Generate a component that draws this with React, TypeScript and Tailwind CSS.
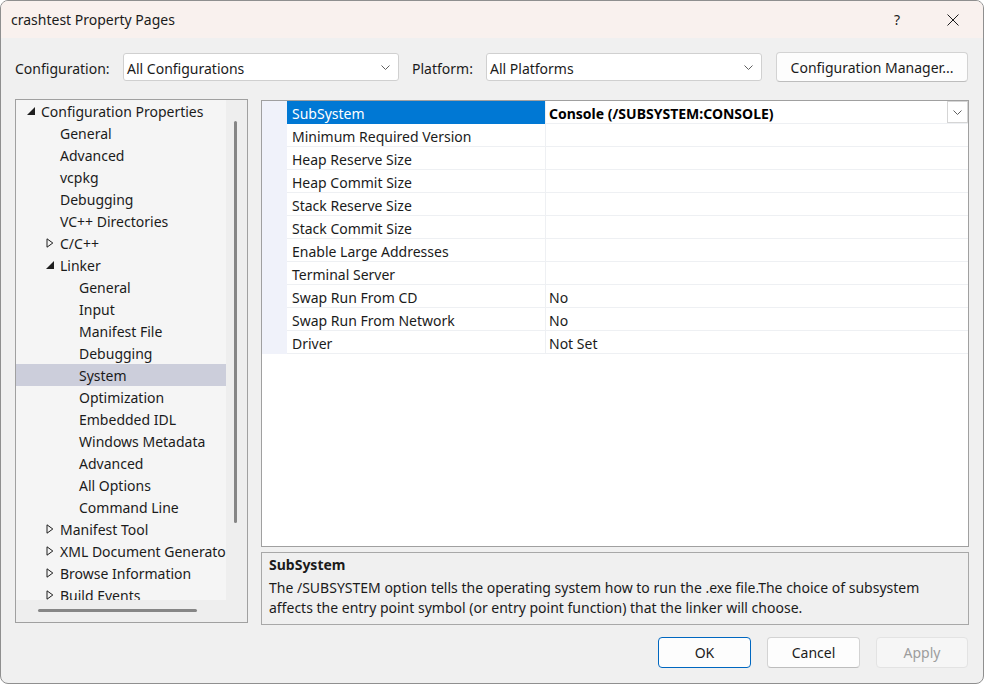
import React from "react";

type Node = [string, number, "open" | "closed" | null];

const tree: Node[] = [
  ["Configuration Properties", 0, "open"],
  ["General", 1, null],
  ["Advanced", 1, null],
  ["vcpkg", 1, null],
  ["Debugging", 1, null],
  ["VC++ Directories", 1, null],
  ["C/C++", 1, "closed"],
  ["Linker", 1, "open"],
  ["General", 2, null],
  ["Input", 2, null],
  ["Manifest File", 2, null],
  ["Debugging", 2, null],
  ["System", 2, null],
  ["Optimization", 2, null],
  ["Embedded IDL", 2, null],
  ["Windows Metadata", 2, null],
  ["Advanced", 2, null],
  ["All Options", 2, null],
  ["Command Line", 2, null],
  ["Manifest Tool", 1, "closed"],
  ["XML Document Generator", 1, "closed"],
  ["Browse Information", 1, "closed"],
  ["Build Events", 1, "closed"],
];

const indent = ["pl-[11px]", "pl-[30px]", "pl-[49px]"];

const props: [string, string][] = [
  ["SubSystem", "Console (/SUBSYSTEM:CONSOLE)"],
  ["Minimum Required Version", ""],
  ["Heap Reserve Size", ""],
  ["Heap Commit Size", ""],
  ["Stack Reserve Size", ""],
  ["Stack Commit Size", ""],
  ["Enable Large Addresses", ""],
  ["Terminal Server", ""],
  ["Swap Run From CD", "No"],
  ["Swap Run From Network", "No"],
  ["Driver", "Not Set"],
];

function Chevron() {
  return (
    <svg width="9" height="5" viewBox="0 0 9 5" className="shrink-0">
      <path d="M0.5 0.5 L4.5 4.5 L8.5 0.5" fill="none" stroke="#5f5f5f" strokeWidth="1" />
    </svg>
  );
}

function Toggle({ state }: { state: "open" | "closed" | null }) {
  if (state === "open") {
    return (
      <svg width="8" height="8" viewBox="0 0 8 8" className="shrink-0">
        <path d="M8 0 L8 8 L0 8 Z" fill="#1e1e1e" />
      </svg>
    );
  }
  if (state === "closed") {
    return (
      <svg width="8" height="10" viewBox="0 0 8 10" className="shrink-0">
        <path d="M1 0.8 L6.8 5 L1 9.2 Z" fill="none" stroke="#1e1e1e" strokeWidth="1" />
      </svg>
    );
  }
  return <span className="w-[8px] shrink-0" />;
}

function Combo({ value }: { value: string }) {
  return (
    <div className="w-[276px] h-[28px] bg-white border border-[#d0d0d0] rounded-[3px] flex items-center justify-between pl-[3px] pr-[8px]">
      <span className="pt-[2px]">{value}</span>
      <Chevron />
    </div>
  );
}

export default function App() {
  return (
    <div className="w-[984px] h-[684px] border border-[#8f8f8f] rounded-[8px] overflow-hidden flex flex-col bg-[#f0f0f0] text-[14px] text-[#1b1b1b] font-['Noto_Sans',sans-serif]">
      {/* Title bar */}
      <div className="h-[37px] shrink-0 bg-[#f9f1ee] flex items-center pl-[10px]">
        <span>crashtest Property Pages</span>
        <div className="ml-auto mr-[24px] flex items-center gap-[40px]">
          <span className="w-[20px] text-center">?</span>
          <svg width="12" height="12" viewBox="0 0 12 12">
            <path d="M0.5 0.5 L11.5 11.5 M11.5 0.5 L0.5 11.5" stroke="#1b1b1b" strokeWidth="1" />
          </svg>
        </div>
      </div>

      <div className="flex-1 flex flex-col px-[14px]">
        {/* Configuration row */}
        <div className="mt-[14px] h-[30px] flex items-center">
          <span className="w-[108px] pt-[2px]">Configuration:</span>
          <Combo value="All Configurations" />
          <span className="ml-[13px] w-[74px] pt-[2px]">Platform:</span>
          <Combo value="All Platforms" />
          <button className="ml-[14px] w-[192px] h-[30px] bg-[#fdfdfd] border border-[#d3d3d3] border-b-[#bdbdbd] rounded-[4px]">
            Configuration Manager...
          </button>
        </div>

        {/* Panels */}
        <div className="mt-[17px] h-[526px] flex items-start gap-[13px]">
          {/* Tree */}
          <div className="w-[233px] h-[524px] border border-[#a0a0a0] flex flex-col">
            <div className="flex h-[500px]">
              <div className="w-[210px] h-[500px] overflow-hidden bg-[#f5f5f5]">
                {tree.map(([label, level, state], i) => (
                  <div
                    key={i}
                    className={`h-[22px] flex items-center gap-[6px] whitespace-nowrap ${indent[level]} ${
                      label === "System" && level === 2 ? "bg-[#cccedb]" : ""
                    }`}
                  >
                    <Toggle state={state} />
                    <span>{label}</span>
                  </div>
                ))}
              </div>
              <div className="w-[21px] h-[500px] bg-[#eeeeee] pt-[21px] pl-[8px]">
                <div className="w-[3px] h-[402px] rounded-full bg-[#868686]" />
              </div>
            </div>
            <div className="h-[22px] flex">
              <div className="w-[210px] bg-[#eeeeee] pt-[9px] pl-[22px]">
                <div className="w-[159px] h-[3px] rounded-full bg-[#868686]" />
              </div>
              <div className="w-[21px] bg-[#eeeeee]" />
            </div>
          </div>

          {/* Right column */}
          <div className="w-[708px] flex flex-col">
            <div className="mt-[1px] h-[447px] border border-[#a0a0a0] bg-white">
              {props.map(([name, value], i) => (
                <div key={i} className="flex h-[23px]">
                  <div className="w-[25px] bg-[#f0f2fa]" />
                  <div
                    className={`w-[258px] flex items-center pl-[5px] pt-[2px] border-b ${
                      i === 0 ? "bg-[#0078d4] text-white border-[#0078d4]" : "border-[#eef0f3]"
                    }`}
                  >
                    {name}
                  </div>
                  <div className="w-[1px] bg-[#eef0f3]" />
                  <div className="flex-1 flex items-center justify-between pl-[3px] border-b border-[#eef0f3]">
                    <span className={`pt-[2px] ${i === 0 ? "font-bold text-black" : ""}`}>{value}</span>
                    {i === 0 && (
                      <div className="w-[21px] h-[22px] border border-[#d5d5d5] bg-white flex items-center justify-center">
                        <Chevron />
                      </div>
                    )}
                  </div>
                </div>
              ))}
            </div>
            <div className="mt-[5px] h-[73px] border border-[#a8a8a8] bg-[#f0f0f0] px-[7px] pt-[2px] leading-[20px]">
              <div className="font-bold">SubSystem</div>
              <div className="mt-[3px]">
                The /SUBSYSTEM option tells the operating system how to run the .exe file.The choice of subsystem
                affects the entry point symbol (or entry point function) that the linker will choose.
              </div>
            </div>
          </div>
        </div>

        {/* Buttons */}
        <div className="mt-[12px] flex justify-end gap-[16px] pr-[1px]">
          <button className="w-[93px] h-[31px] bg-[#fdfdfd] border border-[#0067c0] rounded-[4px]">OK</button>
          <button className="w-[93px] h-[31px] bg-[#fdfdfd] border border-[#d3d3d3] border-b-[#bdbdbd] rounded-[4px]">
            Cancel
          </button>
          <button className="w-[92px] h-[31px] bg-[#f6f6f6] border border-[#e3e3e3] rounded-[4px] text-[#9d9d9d]">
            Apply
          </button>
        </div>
      </div>
    </div>
  );
}
